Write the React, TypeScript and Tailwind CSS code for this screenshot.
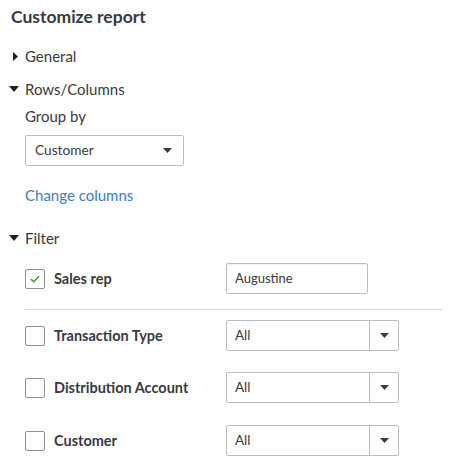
import React from 'react';

const font = { fontFamily: 'Lato, "Noto Sans", sans-serif' };

const Caret: React.FC<{ open: boolean }> = ({ open }) => (
  <span className="w-[14px] flex justify-start">
    {open ? (
      <svg width="10" height="6" viewBox="0 0 10 6" className="ml-[-2px]">
        <path d="M0 0 L10 0 L5 6 Z" fill="#1f1f1f" />
      </svg>
    ) : (
      <svg width="5" height="9" viewBox="0 0 5 9" className="ml-[2px]">
        <path d="M0 0 L5 4.5 L0 9 Z" fill="#1f1f1f" />
      </svg>
    )}
  </span>
);

const Arrow = () => (
  <svg width="9" height="5" viewBox="0 0 9 5">
    <path d="M0 0 L9 0 L4.5 5 Z" fill="#393a3d" />
  </svg>
);

const Checkbox: React.FC<{ checked?: boolean }> = ({ checked }) => (
  <span className="w-5 h-5 border border-[#8d9096] rounded-[2px] bg-white flex items-center justify-center shrink-0">
    {checked && (
      <svg width="10" height="8" viewBox="0 0 10 8">
        <path d="M1 4.2 L3.8 6.8 L9 1.2" fill="none" stroke="#2ca01c" strokeWidth="1.3" />
      </svg>
    )}
  </span>
);

const FilterSelect: React.FC<{ value: string }> = ({ value }) => (
  <div className="w-[173px] h-[31px] border border-[#babec5] rounded-[2px] flex bg-white">
    <span className="flex-1 pl-[8px] flex items-center text-[13.5px] text-[#393a3d]">{value}</span>
    <span className="w-[29px] border-l border-[#babec5] flex items-center justify-center">
      <Arrow />
    </span>
  </div>
);

const FilterRow: React.FC<{ label: string; checked?: boolean; children: React.ReactNode; className?: string }> = ({
  label,
  checked,
  children,
  className,
}) => (
  <div className={`flex items-center pl-[25px] ${className ?? ''}`}>
    <Checkbox checked={checked} />
    <span className="ml-[9px] w-[172px] text-[14.5px] font-bold text-[#393a3d]">{label}</span>
    {children}
  </div>
);

export default function App() {
  const sections = 'flex items-center pl-[11px] text-[15px] leading-5 text-[#393a3d]';
  return (
    <div className="w-[460px] h-[467px] bg-white overflow-hidden" style={font}>
      <h1 className="pt-[7px] pl-[11px] text-[17.5px] leading-5 font-bold text-[#393a3d]">Customize report</h1>

      <div className={`${sections} mt-[19px]`}>
        <Caret open={false} />
        General
      </div>

      <div className={`${sections} mt-[13px]`}>
        <Caret open />
        Rows/Columns
      </div>

      <div className="pl-[25px] mt-[7px] text-[15px] leading-5 text-[#393a3d]">Group by</div>

      <div className="ml-[25px] mt-[9px] w-[159px] h-[31px] border border-[#babec5] rounded-[2px] flex items-center justify-between pl-[9px] pr-[11px] text-[13.7px] text-[#393a3d]">
        Customer
        <Arrow />
      </div>

      <div className="pl-[25px] mt-[19px] text-[15px] leading-5 text-[#3a80be]">Change columns</div>

      <div className={`${sections} mt-[23px]`}>
        <Caret open />
        Filter
      </div>

      <FilterRow label="Sales rep" checked className="mt-[15px]">
        <div className="w-[142px] h-[31px] border border-[#babec5] rounded-[2px] pl-[8px] flex items-center text-[13px] text-[#393a3d] shadow-[inset_0_1px_1px_rgba(0,0,0,0.05)]">
          Augustine
        </div>
      </FilterRow>

      <div className="ml-[25px] mr-[18px] mt-[15px] border-t border-[#d4d7dc]" />

      <FilterRow label="Transaction Type" className="mt-[10px]">
        <FilterSelect value="All" />
      </FilterRow>

      <FilterRow label="Distribution Account" className="mt-[21px]">
        <FilterSelect value="All" />
      </FilterRow>

      <FilterRow label="Customer" className="mt-[22px]">
        <FilterSelect value="All" />
      </FilterRow>
    </div>
  );
}
